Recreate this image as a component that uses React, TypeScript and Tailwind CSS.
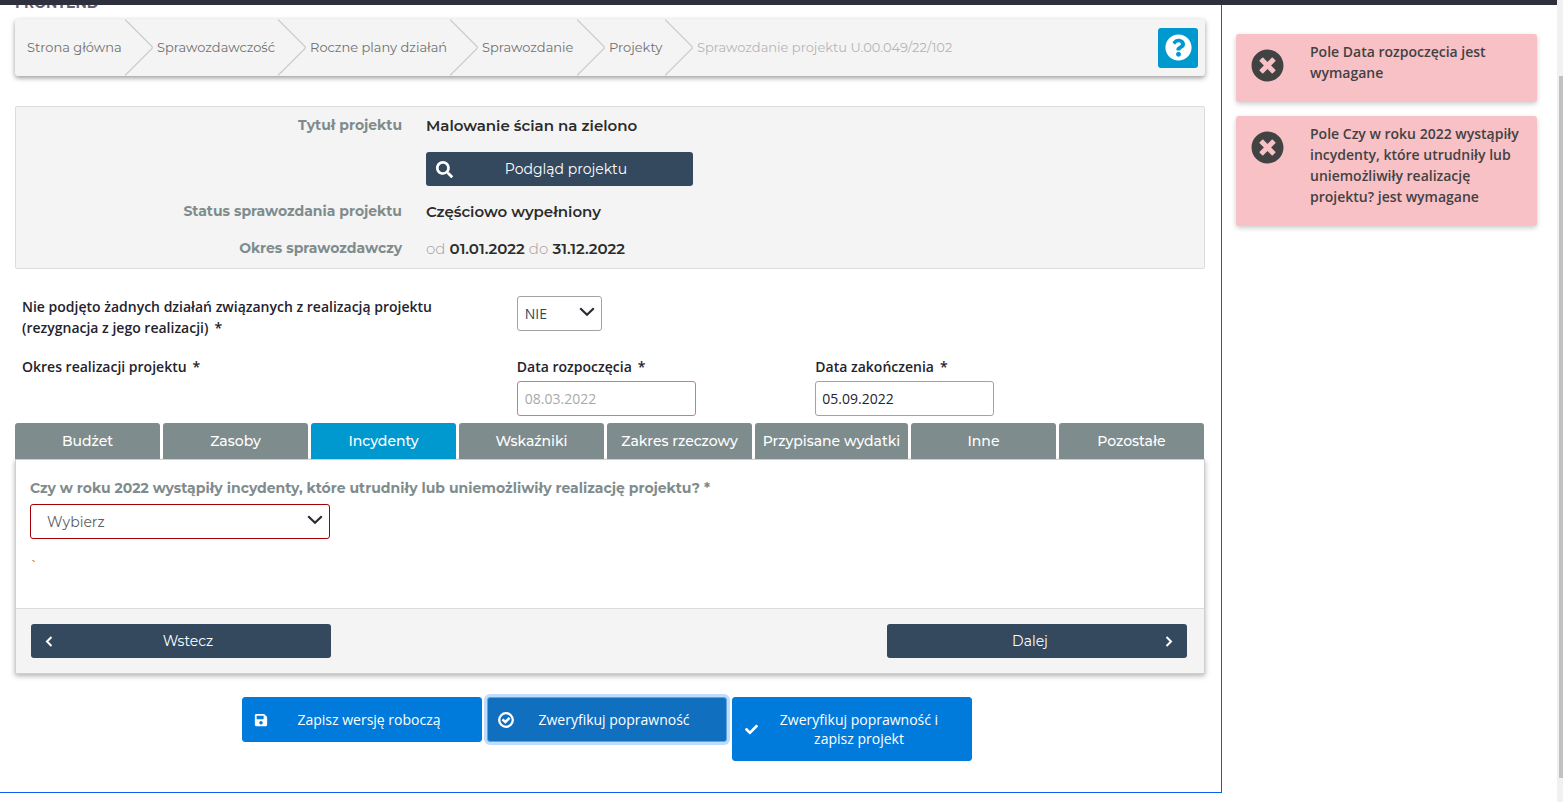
import type { ReactNode } from "react"
import { FaCheck, FaQuestionCircle, FaSave, FaSearch, FaTimesCircle } from "react-icons/fa"

const crumbs = [
  { label: "Strona główna", width: "min-w-[98px]" },
  { label: "Sprawozdawczość", width: "min-w-[121px]" },
  { label: "Roczne plany działań", width: "min-w-[140px]" },
  { label: "Sprawozdanie", width: "min-w-[95px]" },
  { label: "Projekty", width: "min-w-[56px]" },
]

const tabs = ["Budżet", "Zasoby", "Incydenty", "Wskaźniki", "Zakres rzeczowy", "Przypisane wydatki", "Inne", "Pozostałe"]

const errors = [
  "Pole Data rozpoczęcia jest wymagane",
  "Pole Czy w roku 2022 wystąpiły incydenty, które utrudniły lub uniemożliwiły realizację projektu? jest wymagane",
]

const Chevron = () => (
  <svg className="pointer-events-none absolute right-[7px] top-[11px] h-[10px] w-4" viewBox="0 0 16 10" fill="none" stroke="#2b2b33" strokeWidth={2.2}>
    <path d="M1.2 1.2L8 7.8L14.8 1.2" />
  </svg>
)

const Angle = ({ d }: { d: string }) => (
  <svg className="h-[11px] w-2" viewBox="0 0 8 11" fill="none" stroke="currentColor" strokeWidth={2}>
    <path d={d} />
  </svg>
)

const CheckCircle = () => (
  <svg className="size-4" viewBox="0 0 16 16" fill="none" stroke="currentColor">
    <circle cx="8" cy="8" r="6.8" strokeWidth={2.3} />
    <path d="M4.5 7.4L7.3 10L11.6 5.8" strokeWidth={2.5} />
  </svg>
)

const Required = () => <span className="ml-[6px]">*</span>

const Breadcrumbs = () => (
  <nav aria-label="Breadcrumb" className="flex h-[57px] items-center justify-between rounded-[3px] bg-[#f4f4f4] pl-3 pr-[7px] shadow-[0_2px_5px_rgba(0,0,0,0.4)]">
    <ol className="flex items-center text-[13px] text-[#707070]">
      {crumbs.map((crumb) => (
        <li key={crumb.label} className="flex items-center">
          <a href="#" className={`${crumb.width} whitespace-nowrap`}>{crumb.label}</a>
          <svg className="mr-1 h-[57px] w-7" viewBox="0 0 28 57" fill="none" stroke="#cdcdcd" strokeWidth={1.3}>
            <path d="M0 0.5L26.5 27Q28 28.5 26.5 30L0 56.5" />
          </svg>
        </li>
      ))}
      <li className="whitespace-nowrap text-[#b5b5b5]" aria-current="page">Sprawozdanie projektu U.00.049/22/102</li>
    </ol>
    <button aria-label="Pomoc" className="flex size-10 items-center justify-center rounded-[3px] bg-[#0099cf] text-white">
      <FaQuestionCircle size={27} />
    </button>
  </nav>
)

const InfoRow = ({ label, children }: { label: string; children: ReactNode }) => (
  <div className="grid grid-cols-[1fr_2fr] leading-[37px]">
    <dt className="pr-[10px] text-right text-sm leading-[37px] font-bold text-[#7f8c8d]">{label}</dt>
    <dd className="pl-[14px] text-[15px] font-semibold text-[#2b2b2b]">{children}</dd>
  </div>
)

const ProjectInfo = () => (
  <dl className="mt-[30px] rounded-[2px] border border-[#dcdcdc] bg-[#f4f4f4] pb-px">
    <InfoRow label="Tytuł projektu">
      Malowanie ścian na zielono
      <button className="mt-2 mb-[7px] flex h-[34px] w-[267px] items-center rounded-[3px] bg-[#34495e] px-[10px] text-sm font-normal text-white">
        <FaSearch size={17} />
        <span className="flex-1 pr-1 text-center">Podgląd projektu</span>
      </button>
    </InfoRow>
    <InfoRow label="Status sprawozdania projektu">Częściowo wypełniony</InfoRow>
    <InfoRow label="Okres sprawozdawczy">
      <span className="font-light text-[#a89a9d]">od</span> 01.01.2022 <span className="font-light text-[#a89a9d]">do</span> 31.12.2022
    </InfoRow>
  </dl>
)

const ProjectForm = () => (
  <form className="mt-[27px] font-['Open_Sans',sans-serif] text-sm leading-[21px] text-[#23232d]">
    <div className="grid grid-cols-12">
      <label htmlFor="resigned" className="col-span-5 pl-[7px] font-semibold">
        Nie podjęto żadnych działań związanych z realizacją projektu<br />(rezygnacja z jego realizacji)<Required />
      </label>
      <div className="col-span-3 pl-[6px]">
        <div className="relative w-[85px]">
          <select id="resigned" defaultValue="NIE" className="h-[35px] w-full appearance-none rounded-[3px] border border-[#a3a3a3] bg-white px-[7px] text-[#34495e]">
            <option>NIE</option>
            <option>TAK</option>
          </select>
          <Chevron />
        </div>
      </div>
    </div>
    <div className="mt-[11px] grid grid-cols-12">
      <div className="col-span-5 pl-[7px] pt-[7px] font-semibold">Okres realizacji projektu<Required /></div>
      <div className="col-span-3 pl-[6px] pt-[7px]">
        <label htmlFor="start" className="block font-semibold">Data rozpoczęcia<Required /></label>
        <input id="start" placeholder="08.03.2022" className="mt-1 block h-[35px] w-[179px] rounded-[3px] border border-[#c87f7f] bg-white px-[7px] placeholder:text-[#a9a9a9]" />
      </div>
      <div className="col-span-4 pl-[7px] pt-[7px]">
        <label htmlFor="end" className="block font-semibold">Data zakończenia<Required /></label>
        <input id="end" defaultValue="05.09.2022" className="mt-1 block h-[35px] w-[179px] rounded-[3px] border border-[#a3a3a3] bg-white px-[6px]" />
      </div>
    </div>
  </form>
)

const Incidents = () => (
  <section className="mt-[7px]">
    <div role="tablist" className="flex gap-[3px] pr-px text-sm font-medium text-white">
      {tabs.map((tab) => (
        <button
          key={tab}
          role="tab"
          aria-selected={tab === "Incydenty"}
          className={`h-9 flex-1 whitespace-nowrap rounded-t-[3px] ${tab === "Incydenty" ? "bg-[#0099cf]" : "bg-[#7f8c8d]"} ${tab === "Przypisane wydatki" ? "min-w-[153px]" : ""}`}
        >
          {tab}
        </button>
      ))}
    </div>
    <div className="border border-[#cfcfcf] bg-white text-sm shadow-[0_2px_5px_rgba(0,0,0,0.3)]">
      <div className="px-[14px] pb-9 pt-[18px]">
        <label htmlFor="incidents" className="block font-bold leading-[21px] text-[#7f8c8d]">
          Czy w roku 2022 wystąpiły incydenty, które utrudniły lub uniemożliwiły realizację projektu? *
        </label>
        <div className="relative mt-[5px] w-[300px]">
          <select id="incidents" className="h-[35px] w-full appearance-none rounded-[3px] border border-[#a50005] bg-white px-4 text-[#606060]">
            <option>Wybierz</option>
          </select>
          <Chevron />
        </div>
        <p className="mt-[17px] h-4 leading-5 text-[#a86a45]">`</p>
      </div>
      <div className="flex justify-between border-t border-[#dcdcdc] bg-[#f4f4f4] py-[15px] pl-[15px] pr-[17px] text-white">
        <button className="flex h-[34px] w-[300px] items-center rounded-[3px] bg-[#34495e] px-[14px]">
          <Angle d="M6.5 1L2 5.5L6.5 10" />
          <span className="flex-1 pl-[6px] text-center">Wstecz</span>
        </button>
        <button className="flex h-[34px] w-[300px] items-center rounded-[3px] bg-[#34495e] px-[14px]">
          <span className="flex-1 pr-[6px] text-center">Dalej</span>
          <Angle d="M1.5 1L6 5.5L1.5 10" />
        </button>
      </div>
    </div>
  </section>
)

const ActionButton = ({ icon, focused, children }: { icon: ReactNode; focused?: boolean; children: ReactNode }) => (
  <button
    className={`flex w-60 items-center rounded-[3px] border pl-[10px] pr-3 py-3 leading-[19px] ${focused ? "border-[#5ca4e6] bg-[#116fbf] ring-3 ring-[#bfdcfb]" : "border-[#007bdb] bg-[#007bdb]"}`}
  >
    <span className="flex w-4 shrink-0 justify-center">{icon}</span>
    <span className="flex-1 px-5 text-center">{children}</span>
  </button>
)

const Toasts = () => (
  <aside className="w-[335px] shrink-0 pl-[14px] pr-5 pt-[29px]">
    {errors.map((error) => (
      <div key={error} role="alert" className="mb-[14px] flex rounded-[3px] bg-[#f8c1c6] pb-[19px] pl-[15px] pr-2 pt-[7px] shadow-[0_2px_5px_rgba(0,0,0,0.2)]">
        <FaTimesCircle size={33} className="mt-2 shrink-0 text-[#424242]" />
        <p className="ml-[26px] font-['Open_Sans',sans-serif] text-sm font-semibold leading-[21px] text-[#424242]">{error}</p>
      </div>
    ))}
  </aside>
)

const App = () => {
  return (
    <div className="flex min-h-screen bg-white font-[Montserrat,Inter,sans-serif]">
      <div className="min-w-0 flex-1">
        <header className="sticky top-0 z-10 h-[5px] bg-[#2f303e]" />
        <div className="flex">
          <main className="min-w-0 flex-1 border-b border-r border-[#0f5cf5] pb-[31px] pl-[15px] pr-4">
            <h1 className="-mt-[9px] mb-[9px] text-sm font-bold leading-[14px] text-[#5f6070]">FRONTEND</h1>
            <Breadcrumbs />
            <ProjectInfo />
            <ProjectForm />
            <Incidents />
            <div className="mt-[23px] flex items-start justify-center gap-[5px] pr-[6px] font-['Open_Sans',sans-serif] text-sm text-white">
              <ActionButton icon={<FaSave size={14} />}>Zapisz wersję roboczą</ActionButton>
              <ActionButton focused icon={<CheckCircle />}>Zweryfikuj poprawność</ActionButton>
              <ActionButton icon={<FaCheck size={13} />}>Zweryfikuj poprawność i zapisz projekt</ActionButton>
            </div>
          </main>
          <Toasts />
        </div>
      </div>
      <div aria-hidden="true" className="w-[6px] shrink-0 bg-[#f1f1f1] pl-[2px] pt-[76px]">
        <div className="h-[702px] bg-[#c1c1c1]" />
      </div>
    </div>
  )
}

export default App
